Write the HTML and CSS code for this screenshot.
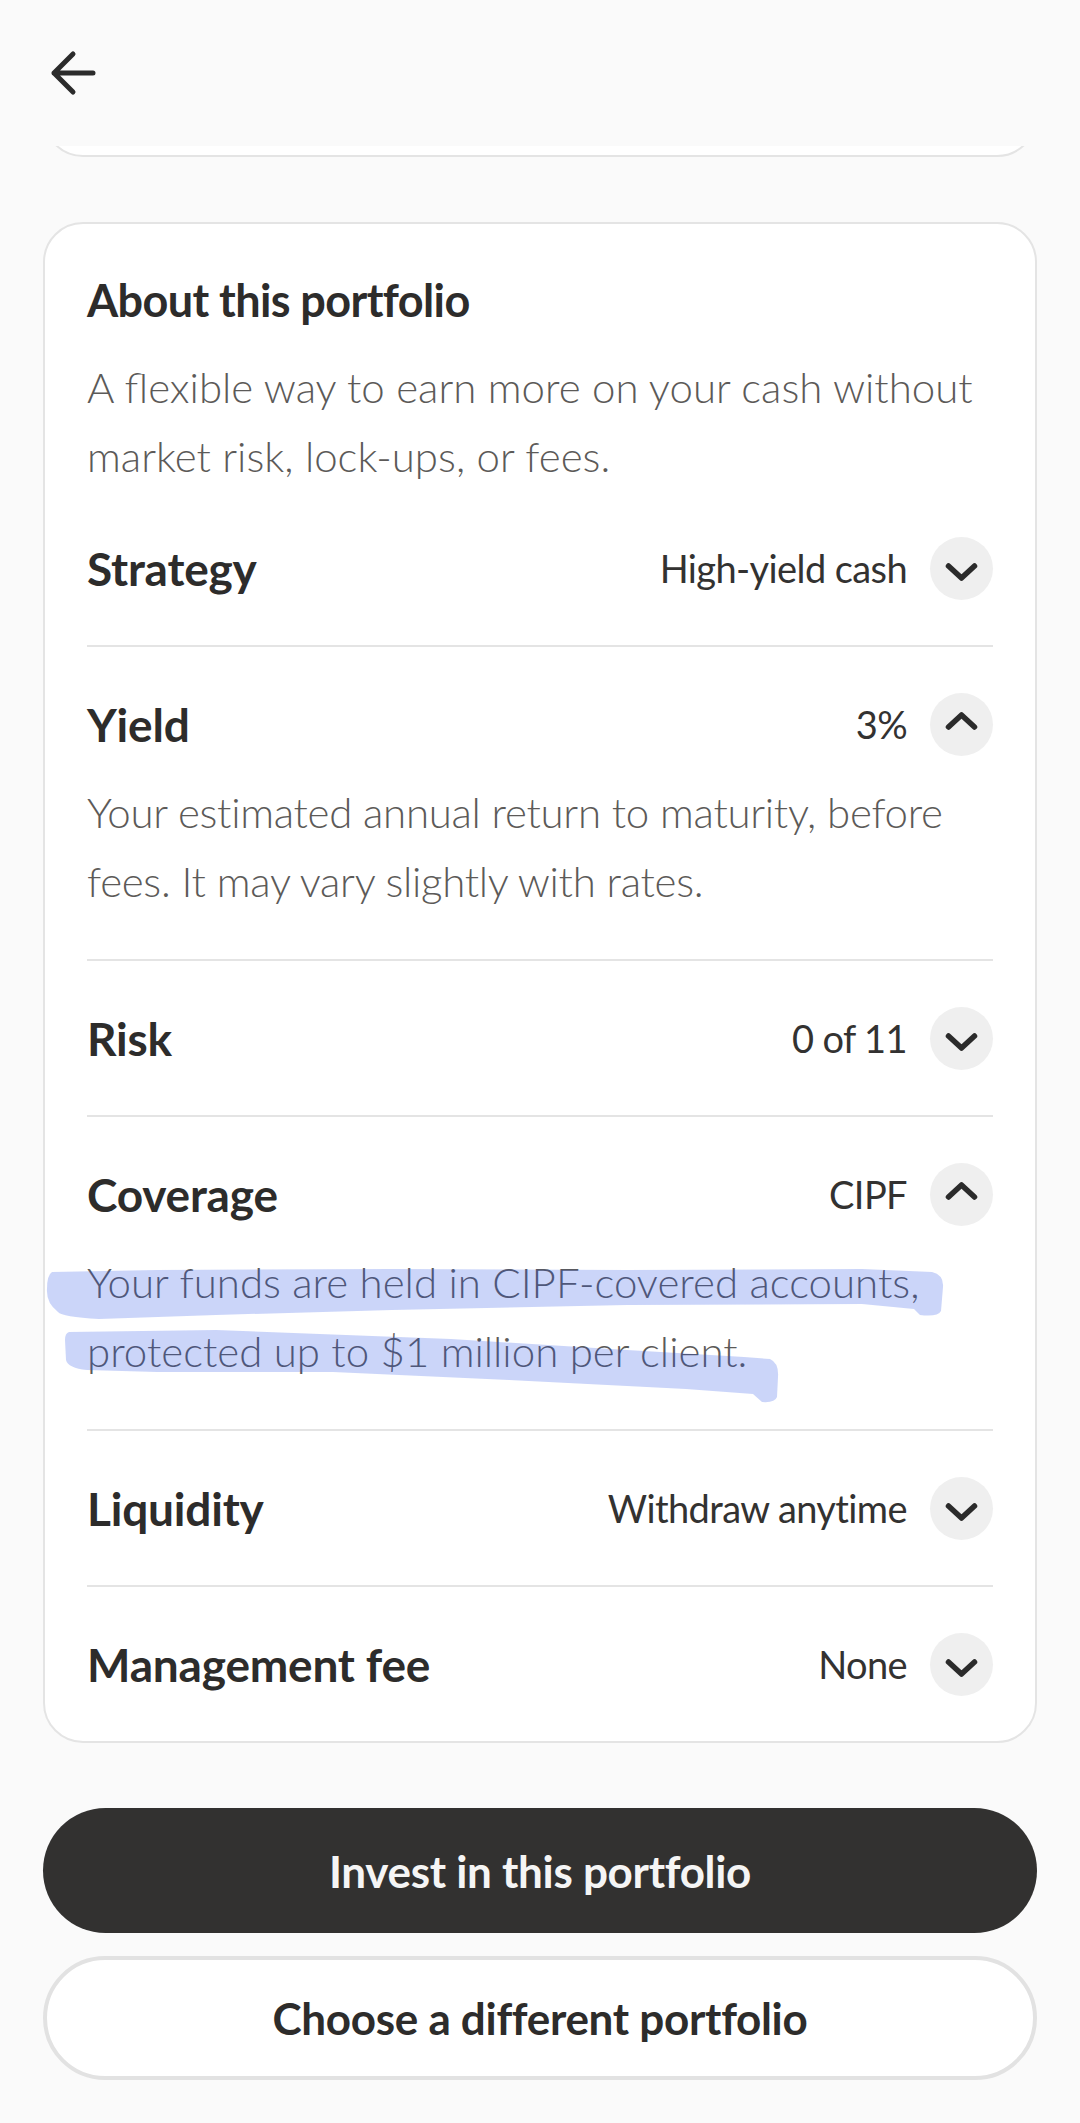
FILE: index.html
```html
<!DOCTYPE html>
<html lang="en">
<head>
<meta charset="utf-8">
<title>About this portfolio</title>
<link rel="stylesheet" href="styles.css">
</head>
<body>
<header class="topbar">
  <button class="back" aria-label="Back">
    <svg width="48" height="48" viewBox="0 0 48 48"><path d="M44 24H5M24 5L5 24L24 43" fill="none" stroke="#2b2b2b" stroke-width="5" stroke-linecap="round" stroke-linejoin="round"/></svg>
  </button>
</header>
<div class="peek"><div class="peek-card"></div></div>
<main class="content">
  <section class="card">
    <h2 class="card-title">About this portfolio</h2>
    <p class="card-lead">A flexible way to earn more on your cash without<br>market risk, lock-ups, or fees.</p>

    <div class="row">
      <div class="row-head">
        <span class="label">Strategy</span>
        <span class="value">High-yield cash</span>
        <span class="toggle"><svg viewBox="0 0 63 63"><polyline points="18.5,29 31.5,41 44.5,29"/></svg></span>
      </div>
    </div>

    <div class="row open">
      <div class="row-head">
        <span class="label">Yield</span>
        <span class="value">3%</span>
        <span class="toggle up"><svg viewBox="0 0 63 63"><polyline points="18.5,29 31.5,41 44.5,29"/></svg></span>
      </div>
      <p class="row-desc">Your estimated annual return to maturity, before<br>fees. It may vary slightly with rates.</p>
    </div>

    <div class="row">
      <div class="row-head">
        <span class="label">Risk</span>
        <span class="value">0 of 11</span>
        <span class="toggle"><svg viewBox="0 0 63 63"><polyline points="18.5,29 31.5,41 44.5,29"/></svg></span>
      </div>
    </div>

    <div class="row open">
      <div class="row-head">
        <span class="label">Coverage</span>
        <span class="value">CIPF</span>
        <span class="toggle up"><svg viewBox="0 0 63 63"><polyline points="18.5,29 31.5,41 44.5,29"/></svg></span>
      </div>
      <p class="row-desc marked">Your funds are held in CIPF-covered accounts,<br>protected up to $1 million per client.
        <svg class="highlight" viewBox="40 1260 910 150" aria-hidden="true">
          <path d="M52 1275 L157 1273 L392 1272 L627 1273 L862 1272 L932 1275 Q944 1278 943 1290 L941 1314 Q938 1320 920 1318 L914 1312 L862 1307 L627 1308 L392 1313 L216 1318 L99 1322 Q62 1320 58 1315 Q46 1306 47 1292 Q47 1278 52 1275 Z"/>
          <path d="M69 1335 L216 1333 L451 1342 L627 1353 L744 1360 L770 1362 Q779 1366 778 1380 L777 1400 Q775 1406 762 1405 L753 1397 L686 1392 L509 1383 L333 1375 L157 1375 L87 1373 Q68 1371 66 1363 L65 1343 Q65 1336 69 1335 Z"/>
        </svg>
      </p>
    </div>

    <div class="row">
      <div class="row-head">
        <span class="label">Liquidity</span>
        <span class="value">Withdraw anytime</span>
        <span class="toggle"><svg viewBox="0 0 63 63"><polyline points="18.5,29 31.5,41 44.5,29"/></svg></span>
      </div>
    </div>

    <div class="row">
      <div class="row-head">
        <span class="label">Management fee</span>
        <span class="value">None</span>
        <span class="toggle"><svg viewBox="0 0 63 63"><polyline points="18.5,29 31.5,41 44.5,29"/></svg></span>
      </div>
    </div>
  </section>

  <div class="actions">
    <button class="btn btn-primary">Invest in this portfolio</button>
    <button class="btn btn-secondary">Choose a different portfolio</button>
  </div>
</main>
</body>
</html>
```
FILE: styles.css
```css
* { box-sizing: border-box; }
html, body { margin: 0; padding: 0; }
body {
  background: #fafafa;
  font-family: "Lato", "Noto Sans", sans-serif;
  color: #2d2c2b;
  width: 1080px;
  min-height: 2123px;
}
.topbar {
  height: 146px;
  padding: 49px 0 0 49px;
  background: #fafafa;
}
.back {
  display: block;
  width: 48px;
  height: 48px;
  padding: 0;
  border: 0;
  background: none;
}
.back svg { display: block; }

.peek {
  height: 11px;
  margin: 0 43px;
  overflow: hidden;
  display: flex;
  flex-direction: column;
  justify-content: flex-end;
}
.peek-card {
  flex: 0 0 80px;
  background: #fff;
  border: 2px solid #e4e4e4;
  border-radius: 40px;
}

.content { padding: 0 43px; }

.card {
  position: relative;
  margin-top: 65px;
  background: #fff;
  border: 2px solid #e4e4e4;
  border-radius: 40px;
  padding: 46px 42px 0;
}
.card-title {
  margin: 0;
  font-size: 45px;
  line-height: 60px;
  font-weight: 700;
  color: #2d2c2b;
  letter-spacing: -0.6px;
}
.card-lead {
  margin: 23px 0 0;
  font-size: 42px;
  line-height: 69px;
  font-weight: 300;
  color: #5c5a58;
}

.row { padding: 23px 0; }
.row + .row { border-top: 2px solid #e4e4e4; }
.row-head {
  height: 108px;
  display: flex;
  align-items: center;
}
.label {
  flex: 1;
  font-size: 46px;
  font-weight: 700;
  color: #2d2c2b;
  letter-spacing: -0.2px;
}
.value {
  font-size: 38px;
  font-weight: 400;
  color: #333231;
  margin-right: 23px;
  letter-spacing: -0.6px;
}
.toggle {
  width: 63px;
  height: 63px;
  border-radius: 50%;
  background: #efefef;
  display: flex;
}
.toggle svg {
  width: 63px;
  height: 63px;
  fill: none;
  stroke: #2b2b2b;
  stroke-width: 5.5;
  stroke-linecap: round;
  stroke-linejoin: round;
}
.toggle.up svg { transform: rotate(180deg); }

.row-desc {
  margin: 0;
  padding-bottom: 20px;
  font-size: 42px;
  line-height: 69px;
  font-weight: 300;
  color: #5c5a58;
  letter-spacing: -0.3px;
}
.marked { position: relative; letter-spacing: 0; }
.highlight {
  position: absolute;
  left: -47px;
  top: 9px;
  width: 910px;
  height: 150px;
  fill: rgba(38, 80, 229, 0.24);
  pointer-events: none;
}

.actions {
  margin-top: 65px;
  display: flex;
  flex-direction: column;
  gap: 23px;
}
.btn {
  height: 125px;
  border-radius: 63px;
  font-family: "Lato", "Noto Sans", sans-serif;
  font-size: 44px;
  font-weight: 700;
  letter-spacing: -0.3px;
}
.btn-primary {
  background: #323130;
  color: #f5f5f5;
  border: 0;
}
.btn-secondary {
  background: #fff;
  color: #2d2c2b;
  border: 4px solid #e2e2e2;
  height: 124px;
}
```
